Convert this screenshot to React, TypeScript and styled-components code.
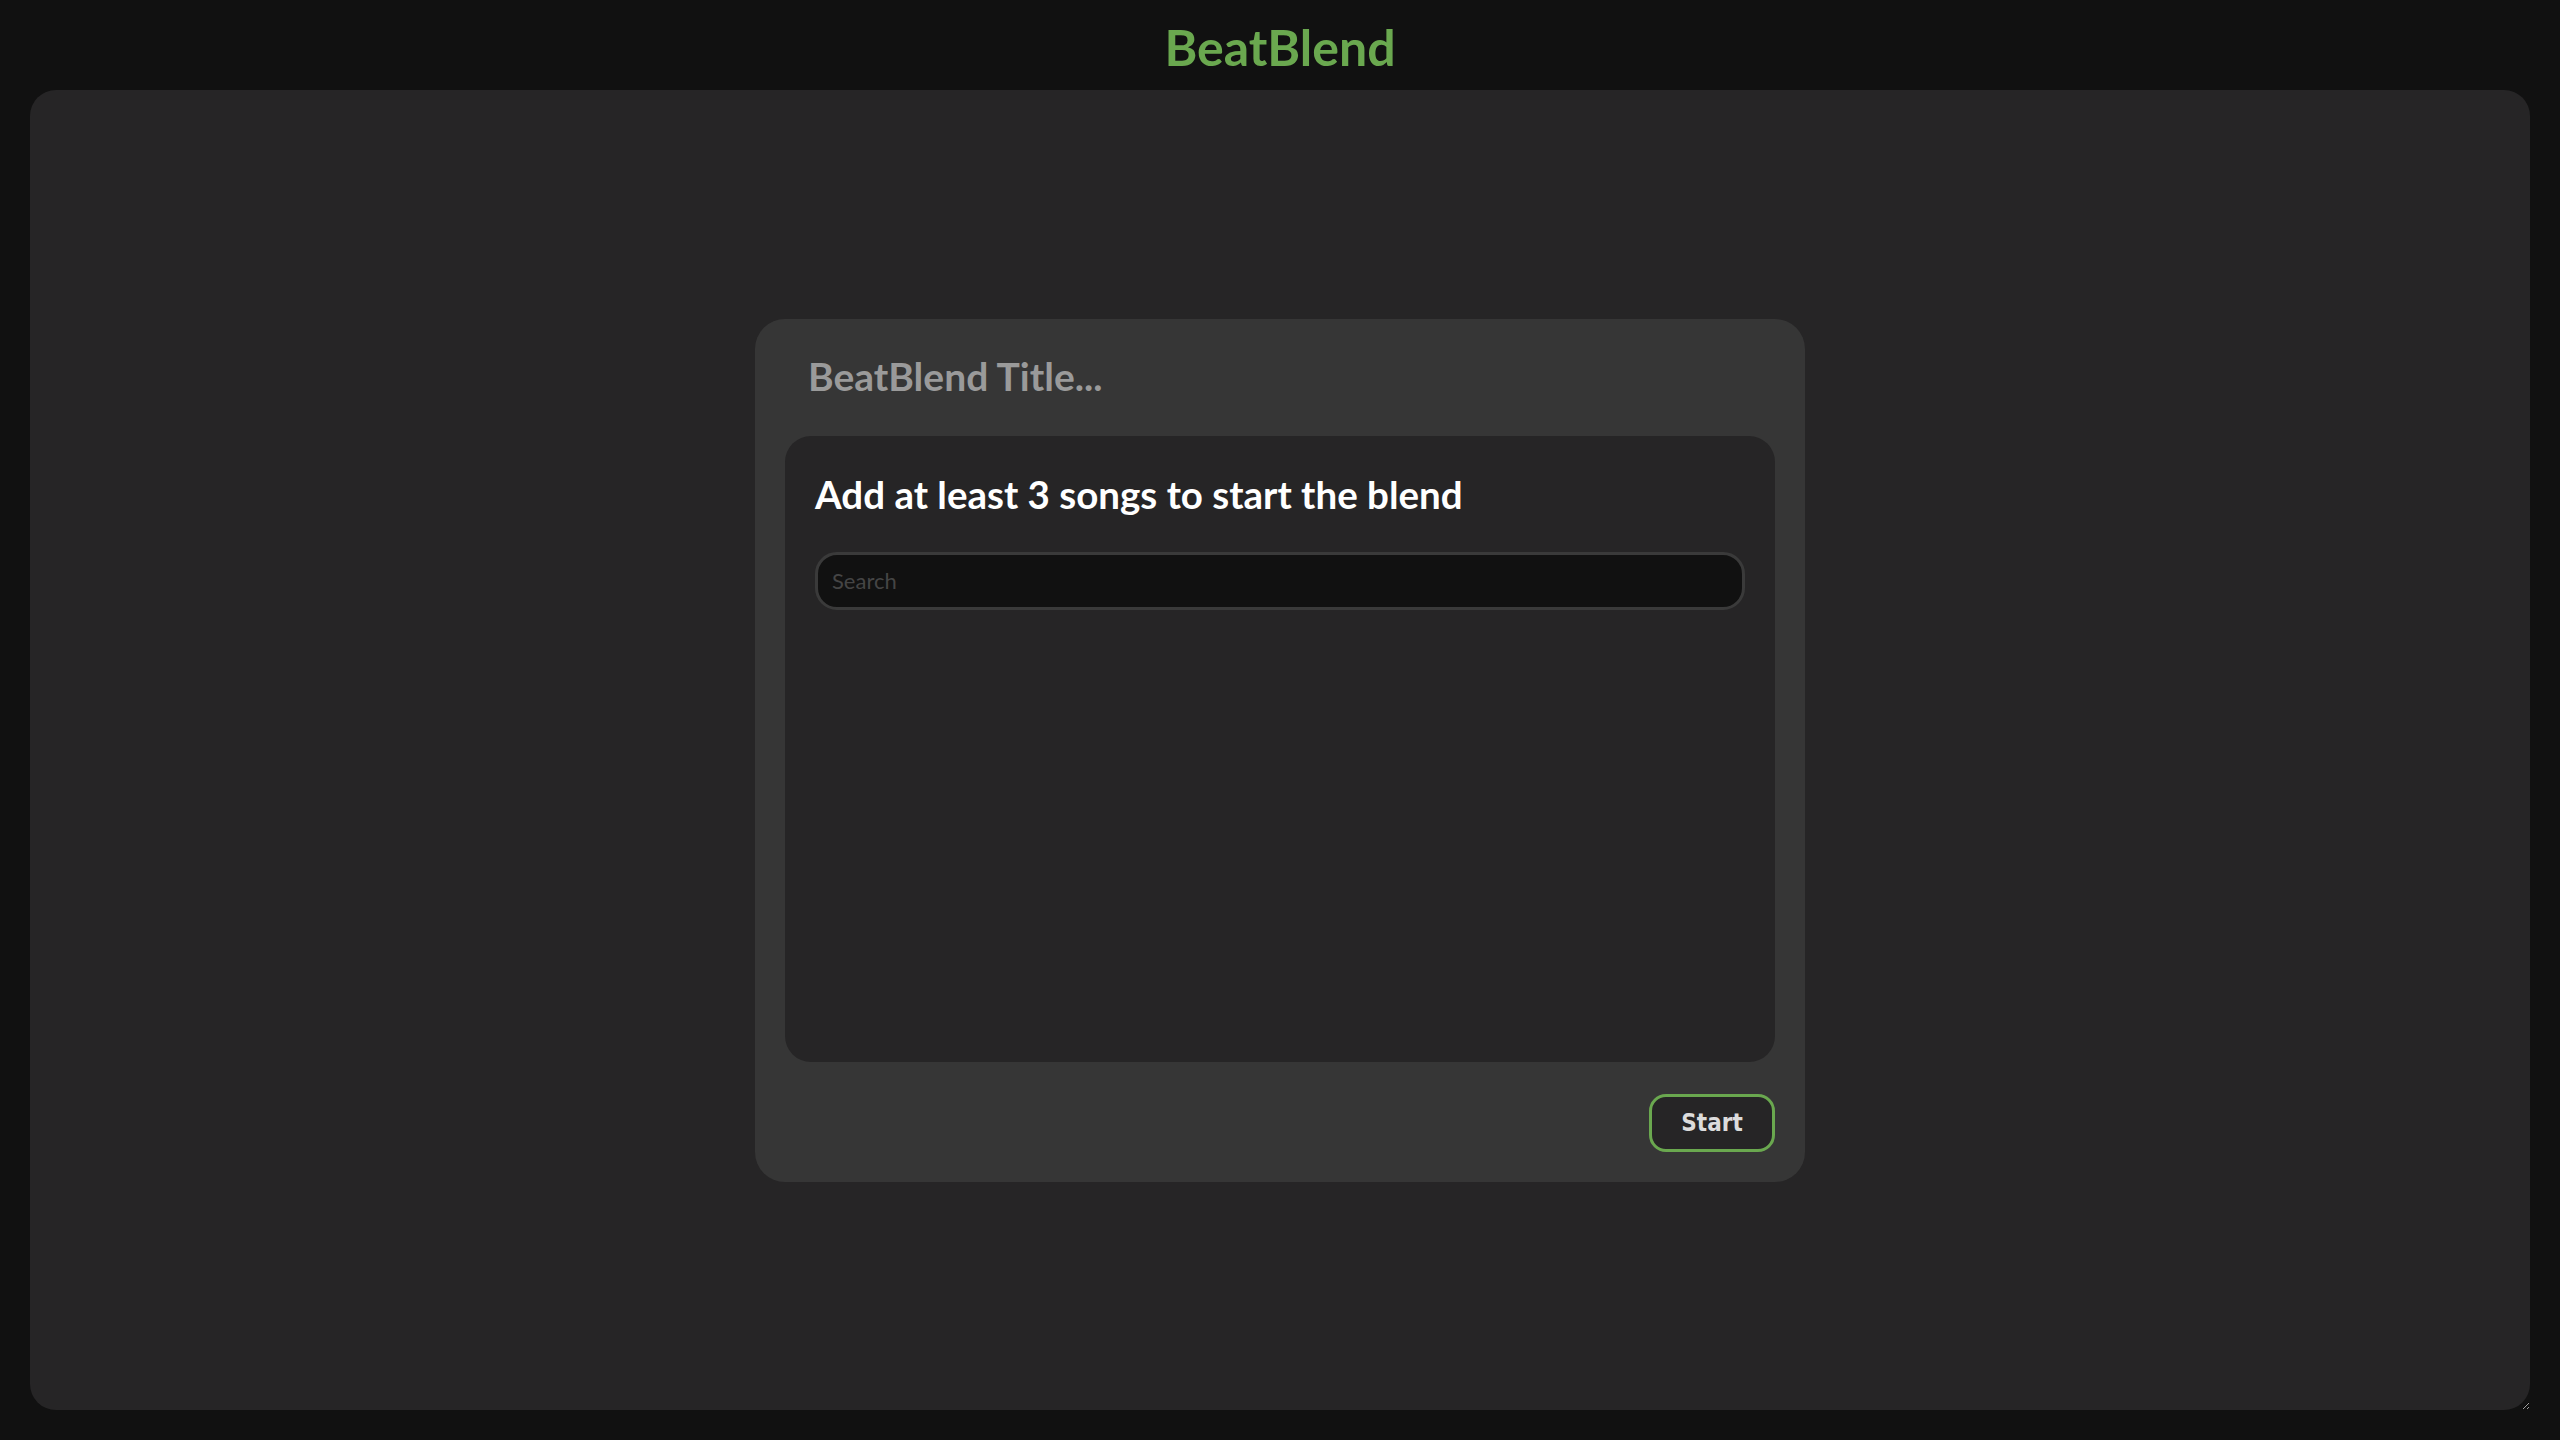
import React from "react"
import styled, { createGlobalStyle } from "styled-components"

const GlobalStyle = createGlobalStyle`
  html, body {
    margin: 0;
    padding: 0;
    background: #111111;
  }

  body {
    font-family: Lato, "Open Sans", sans-serif;
  }
`

export default function App() {
  return (
    <>
      <GlobalStyle />
      <Page>
        <Header>
          <Logo>BeatBlend</Logo>
        </Header>
        <Main>
          <BlendCard>
            <BlendTitle>BeatBlend Title...</BlendTitle>
            <SongsPanel>
              <SongsHeading>Add at least 3 songs to start the blend</SongsHeading>
              <SearchInput type="text" placeholder="Search" />
            </SongsPanel>
            <Footer>
              <StartButton>Start</StartButton>
            </Footer>
          </BlendCard>
        </Main>
      </Page>
    </>
  )
}

const Page = styled.div`
  display: flex;
  flex-direction: column;
  height: 1440px;
  box-sizing: border-box;
  padding: 0 30px 30px;
`

const Header = styled.header`
  height: 90px;
  display: flex;
  align-items: center;
  justify-content: center;
  flex-shrink: 0;
`

const Logo = styled.h1`
  margin: 0;
  font-family: Lato, "Open Sans", sans-serif;
  font-size: 50px;
  font-weight: 700;
  color: #6aa84f;
  line-height: 1;
  padding-top: 4px;
`

const Main = styled.main`
  flex: 1;
  display: flex;
  align-items: center;
  justify-content: center;
  background: #262526;
  border-radius: 26px;
  resize: both;
  overflow: auto;
`

const BlendCard = styled.section`
  width: 1050px;
  box-sizing: border-box;
  padding: 30px;
  background: #363636;
  border-radius: 30px;
  display: flex;
  flex-direction: column;
`

const BlendTitle = styled.h2`
  margin: 0;
  padding: 6px 23px 38px;
  font-size: 39px;
  font-weight: 700;
  color: #9a9a9a;
  line-height: 43px;
`

const SongsPanel = styled.div`
  height: 626px;
  box-sizing: border-box;
  padding: 35px 30px;
  background: #262526;
  border-radius: 26px;
  display: flex;
  flex-direction: column;
  gap: 35px;
`

const SongsHeading = styled.h3`
  margin: 0;
  font-size: 38.5px;
  font-weight: 700;
  color: #ffffff;
  line-height: 1.2;
`

const SearchInput = styled.input`
  height: 58px;
  box-sizing: border-box;
  padding: 0 14px;
  background: #111111;
  border: 3px solid #3a3a3a;
  border-radius: 22px;
  font-family: Lato, "Open Sans", sans-serif;
  font-size: 22px;
  color: #dddddd;
  outline: none;

  &::placeholder {
    color: #454545;
  }
`

const Footer = styled.div`
  display: flex;
  justify-content: flex-end;
  padding-top: 32px;
`

const StartButton = styled.button`
  width: 126px;
  height: 58px;
  background: #262526;
  border: 3px solid #6aa84f;
  border-radius: 17px;
  font-family: "DejaVu Sans Condensed", "DejaVu Sans", sans-serif;
  font-size: 24px;
  font-weight: 700;
  color: #dcdcdc;
  cursor: pointer;
`
